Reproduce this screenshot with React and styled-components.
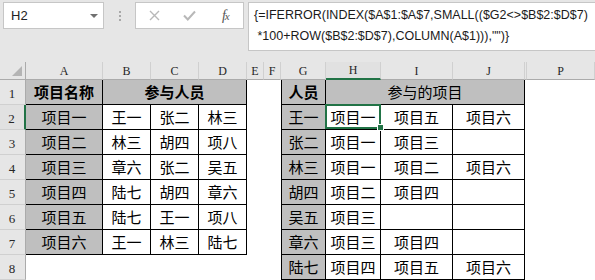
import styled, { createGlobalStyle } from 'styled-components';

const GlobalStyle = createGlobalStyle`
  html, body {
    margin: 0;
    padding: 0;
    background: #ffffff;
  }
  body {
    width: 595px;
    height: 280px;
    overflow: hidden;
  }
`;

const Window = styled.div`
  width: 595px;
  height: 280px;
  overflow: hidden;
  display: flex;
  flex-direction: column;
  background: #ffffff;
`;

const FormulaBar = styled.div`
  flex: 0 0 62px;
  display: flex;
  align-items: flex-start;
  padding: 2px 0 0 3px;
  box-sizing: border-box;
  background: #e6e6e6;
`;

const NameBox = styled.div`
  width: 101px;
  height: 27px;
  box-sizing: border-box;
  display: flex;
  align-items: center;
  justify-content: space-between;
  padding: 0 5px 0 7px;
  background: #ffffff;
  border: 1px solid #c6c6c6;
  font: 13px "Liberation Sans", Arial, sans-serif;
  color: #222222;
`;

const DropArrow = styled.span`
  width: 0;
  height: 0;
  border-left: 4px solid transparent;
  border-right: 4px solid transparent;
  border-top: 4px solid #707070;
`;

const Grip = styled.div`
  width: 31px;
  height: 27px;
  display: flex;
  flex-direction: column;
  align-items: center;
  justify-content: center;
  gap: 2px;
`;

const GripDot = styled.span`
  width: 2px;
  height: 2px;
  background: #a8a8a8;
`;

const ButtonBox = styled.div`
  width: 109px;
  height: 27px;
  box-sizing: border-box;
  display: flex;
  align-items: center;
  padding-left: 1px;
  background: #ffffff;
  border: 1px solid #c6c6c6;
`;

const BarButton = styled.span`
  width: 36px;
  height: 25px;
  display: flex;
  align-items: center;
  justify-content: center;
  color: ${(p) => p.$color || '#b8b8b8'};
`;

const Fx = styled.span`
  font: italic 14px "Liberation Serif", "Times New Roman", serif;
  color: #555555;
  letter-spacing: -1px;

  small {
    font-size: 11px;
  }
`;

const FormulaBox = styled.div`
  flex: 1;
  height: 49px;
  margin-left: 4px;
  box-sizing: border-box;
  padding: 2px 0 0 5px;
  background: #ffffff;
  border: 1px solid #c6c6c6;
  border-right: none;
  font: 12.5px "Liberation Sans", Arial, sans-serif;
  line-height: 21px;
  color: #1a1a1a;
  white-space: pre;
`;

const Sheet = styled.div`
  flex: 1;
  display: grid;
  grid-template-columns: 26px 77px 48px 48px 48px 17px 17px 45px 55px 72px 72px 2px 1fr;
  grid-template-rows: 18px repeat(8, 25px);
  background: #ffffff;
`;

const HeaderCell = styled.div`
  box-sizing: border-box;
  display: flex;
  align-items: flex-end;
  justify-content: center;
  padding-bottom: 1px;
  background: ${(p) => (p.$selected ? '#e1e1e1' : '#e6e6e6')};
  border-right: 1px solid #d0d0d0;
  border-bottom: ${(p) => (p.$selected ? '2px solid #217346' : '1px solid #ababab')};
  font: 12px "Liberation Serif", "Times New Roman", serif;
  line-height: 14px;
  color: #262626;
`;

const Corner = styled(HeaderCell)`
  justify-content: flex-end;
  padding: 0 3px 3px 0;
  border-right: 1px solid #ababab;

  &::after {
    content: '';
    width: 0;
    height: 0;
    border-left: 10px solid transparent;
    border-bottom: 10px solid #b4b4b4;
  }
`;

const RowHeader = styled.div`
  box-sizing: border-box;
  display: flex;
  align-items: flex-end;
  justify-content: center;
  padding: 0 1px 2px 0;
  background: ${(p) => (p.$selected ? '#e1e1e1' : '#e6e6e6')};
  border-bottom: 1px solid #d0d0d0;
  border-right: ${(p) => (p.$selected ? '2px solid #217346' : '1px solid #ababab')};
  font: 13px "Liberation Serif", "Times New Roman", serif;
  line-height: 16px;
  color: #262626;
`;

const Cell = styled.div`
  position: relative;
  box-sizing: border-box;
  display: flex;
  align-items: center;
  justify-content: center;
  grid-column: ${(p) => (p.$span ? `span ${p.$span}` : 'auto')};
  background: ${(p) => (p.$gray ? '#bfbfbf' : '#ffffff')};
  border-right: ${(p) => (p.$boxed ? '1px solid #000000' : 'none')};
  border-bottom: ${(p) => (p.$boxed ? '1px solid #000000' : 'none')};
  border-left: ${(p) => (p.$lineLeft ? '1px solid #000000' : 'none')};
  font: ${(p) => (p.$bold ? 'bold' : 'normal')} 15px "Noto Sans CJK SC", "Noto Sans", sans-serif;
  line-height: 18px;
  color: #000000;
  white-space: nowrap;
`;

const ActiveFrame = styled.span`
  position: absolute;
  top: -1px;
  left: -1px;
  right: -1px;
  bottom: 0;
  border: 2px solid #217346;
  pointer-events: none;
  z-index: 2;

  &::after {
    content: '';
    position: absolute;
    right: -5px;
    bottom: -4px;
    width: 5px;
    height: 5px;
    background: #217346;
    border: 1px solid #ffffff;
  }
`;

const columns = ['A', 'B', 'C', 'D', 'E', 'F', 'G', 'H', 'I', 'J', '', 'P'];

const projects = [
  ['项目一', '王一', '张二', '林三'],
  ['项目二', '林三', '胡四', '项八'],
  ['项目三', '章六', '张二', '吴五'],
  ['项目四', '陆七', '胡四', '章六'],
  ['项目五', '陆七', '王一', '项八'],
  ['项目六', '王一', '林三', '陆七'],
];

const people = [
  ['王一', '项目一', '项目五', '项目六'],
  ['张二', '项目一', '项目三', ''],
  ['林三', '项目一', '项目二', '项目六'],
  ['胡四', '项目二', '项目四', ''],
  ['吴五', '项目三', '', ''],
  ['章六', '项目三', '项目四', ''],
  ['陆七', '项目四', '项目五', '项目六'],
];

function CloseIcon() {
  return (
    <svg width="11" height="11" viewBox="0 0 11 11">
      <path d="M1 1L10 10M10 1L1 10" stroke="currentColor" strokeWidth="1.4" fill="none" />
    </svg>
  );
}

function CheckIcon() {
  return (
    <svg width="13" height="11" viewBox="0 0 13 11">
      <path d="M1 5.5L4.8 9.5L12 1.5" stroke="currentColor" strokeWidth="2" fill="none" />
    </svg>
  );
}

function LeftTable({ row }) {
  if (row === 1) {
    return (
      <>
        <Cell $gray $boxed $bold>项目名称</Cell>
        <Cell $gray $boxed $bold $span={3}>参与人员</Cell>
      </>
    );
  }
  const data = projects[row - 2];
  if (!data) {
    return (
      <>
        <Cell />
        <Cell />
        <Cell />
        <Cell />
      </>
    );
  }
  return (
    <>
      <Cell $gray $boxed>{data[0]}</Cell>
      <Cell $boxed>{data[1]}</Cell>
      <Cell $boxed>{data[2]}</Cell>
      <Cell $boxed>{data[3]}</Cell>
    </>
  );
}

function RightTable({ row }) {
  if (row === 1) {
    return (
      <>
        <Cell $gray $boxed $lineLeft $bold>人员</Cell>
        <Cell $gray $boxed $span={3}>参与的项目</Cell>
      </>
    );
  }
  const data = people[row - 2];
  return (
    <>
      <Cell $gray $boxed $lineLeft>{data[0]}</Cell>
      <Cell $boxed>
        {data[1]}
        {row === 2 && <ActiveFrame />}
      </Cell>
      <Cell $boxed>{data[2]}</Cell>
      <Cell $boxed>{data[3]}</Cell>
    </>
  );
}

function RowCells({ row }) {
  return (
    <>
      <RowHeader $selected={row === 2}>{row}</RowHeader>
      <LeftTable row={row} />
      <Cell />
      <Cell />
      <RightTable row={row} />
      <Cell />
      <Cell />
    </>
  );
}

export default function App() {
  const rows = [1, 2, 3, 4, 5, 6, 7, 8];
  return (
    <Window>
      <GlobalStyle />
      <FormulaBar>
        <NameBox>
          H2
          <DropArrow />
        </NameBox>
        <Grip>
          <GripDot />
          <GripDot />
          <GripDot />
        </Grip>
        <ButtonBox>
          <BarButton><CloseIcon /></BarButton>
          <BarButton><CheckIcon /></BarButton>
          <BarButton>
            <Fx>f<small>x</small></Fx>
          </BarButton>
        </ButtonBox>
        <FormulaBox>
          {'{=IFERROR(INDEX($A$1:$A$7,SMALL(($G2<>$B$2:$D$7)\n *100+ROW($B$2:$D$7),COLUMN(A$1))),"")}'}
        </FormulaBox>
      </FormulaBar>

      <Sheet>
        <Corner />
        {columns.map((c, i) => (
          <HeaderCell key={i} $selected={c === 'H'}>{c}</HeaderCell>
        ))}
        {rows.map((r) => (
          <RowCells key={r} row={r} />
        ))}
      </Sheet>
    </Window>
  );
}
